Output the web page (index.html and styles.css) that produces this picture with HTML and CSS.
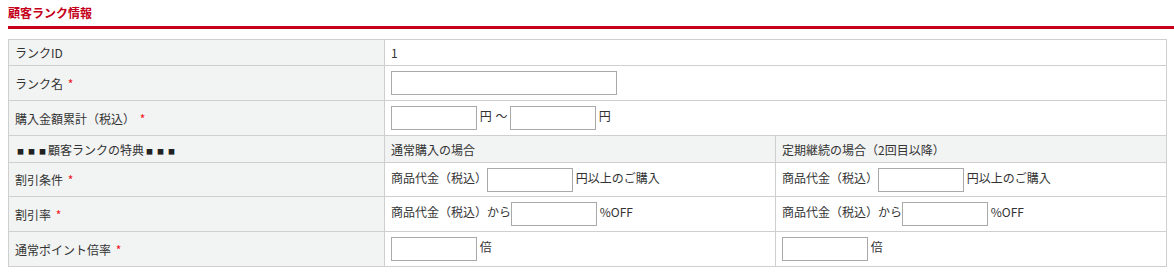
FILE: index.html
```html
<!DOCTYPE html>
<html lang="ja">
<head>
<meta charset="utf-8">
<link rel="stylesheet" href="styles.css">
</head>
<body>
<div class="page">
  <h2 class="title">顧客ランク情報</h2>
  <table class="form">
    <colgroup><col class="c1"><col class="c2"><col class="c3"></colgroup>
    <tr class="r-id">
      <th>ランクID</th>
      <td colspan="2">1</td>
    </tr>
    <tr class="r-in">
      <th>ランク名 <span class="req">*</span></th>
      <td colspan="2"><input type="text" class="in-long"></td>
    </tr>
    <tr class="r-in">
      <th>購入金額累計（税込） <span class="req">*</span></th>
      <td colspan="2"><input type="text" class="in-s"> 円 <span class="tilde">～</span> <input type="text" class="in-s"> 円</td>
    </tr>
    <tr class="r-head">
      <th><span class="sq">■</span><span class="sq">■</span><span class="sq">■</span>顧客ランクの特典<span class="sq">■</span><span class="sq">■</span><span class="sq">■</span></th>
      <th>通常購入の場合</th>
      <th>定期継続の場合（2回目以降）</th>
    </tr>
    <tr class="r-in r-cond">
      <th>割引条件 <span class="req">*</span></th>
      <td>商品代金（税込）<input type="text" class="in-s"> 円以上のご購入</td>
      <td>商品代金（税込）<input type="text" class="in-s"> 円以上のご購入</td>
    </tr>
    <tr class="r-in">
      <th>割引率 <span class="req">*</span></th>
      <td>商品代金（税込）から<input type="text" class="in-s"> %OFF</td>
      <td>商品代金（税込）から<input type="text" class="in-s"> %OFF</td>
    </tr>
    <tr class="r-in">
      <th>通常ポイント倍率 <span class="req">*</span></th>
      <td><input type="text" class="in-s"> 倍</td>
      <td><input type="text" class="in-s"> 倍</td>
    </tr>
  </table>
</div>
</body>
</html>
```

FILE: styles.css
```css
html, body {
  margin: 0;
  padding: 0;
  background: #fff;
}
body {
  font-family: "Noto Sans CJK JP", "Noto Sans", sans-serif;
  font-size: 12px;
  color: #333;
}
.page {
  padding-left: 8px;
}
.title {
  margin: 0;
  padding: 4px 0 4px;
  font-size: 12px;
  line-height: 18px;
  font-weight: bold;
  color: #c4001a;
  border-bottom: 3px solid #c8001e;
}
.form {
  margin-top: 10px;
  width: 1159px;
  border-collapse: collapse;
  table-layout: fixed;
  border: 1px solid #ccc;
}
.c1 { width: 376px; }
.form th,
.form td {
  border: 1px solid #cfcfcf;
  padding: 0 6px;
  text-align: left;
  vertical-align: middle;
  font-weight: normal;
  white-space: nowrap;
}
.form th { background: #f2f3f3; }
.r-id th, .r-id td { height: 25px; }
.r-in th, .r-in td { height: 34px; }
.r-cond th, .r-cond td { height: 33px; }
.r-head th { height: 26px; }
.req {
  color: #f01020;
  margin-left: 2px;
}
.tilde {
  margin-left: 1px;
}
.sq {
  display: inline-block;
  width: 11px;
  text-align: center;
  font-size: 7px;
  vertical-align: 1px;
  color: #222;
}
input {
  box-sizing: border-box;
  height: 24px;
  border: 1px solid #a9a9a9;
  margin: 0;
  padding: 0 2px;
  vertical-align: middle;
  font: inherit;
  background: #fff;
}
.in-long { width: 226px; }
.in-s { width: 86px; }
```
